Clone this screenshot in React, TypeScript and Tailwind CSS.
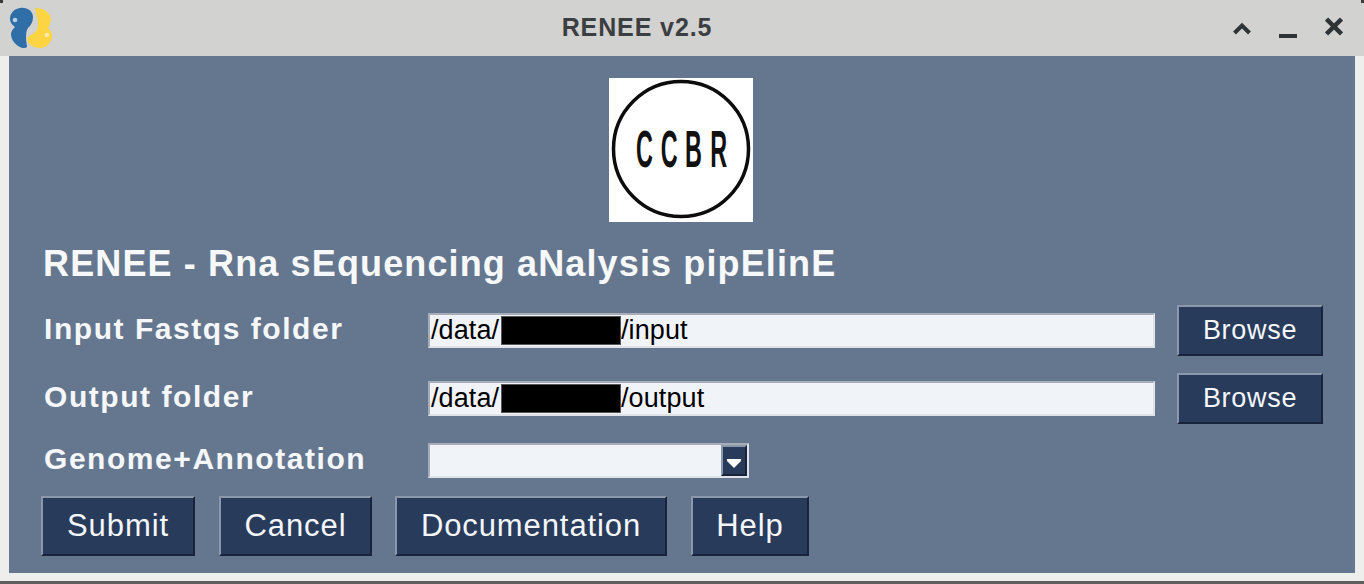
import React from "react";

const sans = "font-['Liberation_Sans',Arial,sans-serif]";

function PythonLogo() {
  return (
    <svg width="44" height="44" viewBox="9 5 44 44" aria-hidden="true">
      <path
        fill="#2f6ea6"
        d="M20 7C27 6 33 10 33 16C33 21 31 24 28 27C26 30 26 33 26 37C26 41 27 44 27 46C25 48 21 47 18 45C14 42 11 38 11 33C11 30 13 28 15 26C12 24 10 21 10 18C10 12 14 8 20 7Z"
      />
      <circle cx="15" cy="19" r="2.300" fill="#b9cfe4" />
      <path
        fill="#fdd542"
        d="M35 7C41 7 46 9 49 13C52 17 51 22 48 27C51 30 53 33 52 37C50 43 46 47 40 47C34 47 29 44 27 39C28 35 31 34 34 32C37 30 38 27 38 23C38 18 36 13 35 7Z"
      />
      <circle cx="47" cy="34" r="2.300" fill="#f5e9b4" />
    </svg>
  );
}

function TkButton({ label, className }: { label: string; className: string }) {
  return (
    <div
      className={`flex items-center justify-center bg-[#283b5b] text-[#f4f6fa] border-2 border-t-[#8b98ac] border-l-[#8b98ac] border-r-[#18243c] border-b-[#18243c] ${className}`}
    >
      {label}
    </div>
  );
}

function Redacted() {
  return <span className="inline-block w-[120px] h-[29px] bg-black border border-[#555]" />;
}

function PathField({ folder }: { folder: string }) {
  return (
    <div className="w-[727px] h-[35px] flex items-center pl-[1px] bg-[#f0f3f8] border-2 border-t-[#a6adb9] border-l-[#a6adb9] border-r-[#dfe2e7] border-b-[#dfe2e7] text-[27px] text-black tracking-[0.1px] whitespace-nowrap">
      <span className="w-[70px]">/data/</span>
      <Redacted />
      <span>{folder}</span>
    </div>
  );
}

function Label({ text }: { text: string }) {
  return (
    <div className="w-[387px] pl-[3px] pb-[4px] text-[30px] font-bold text-[#f5f7fa] tracking-[1.55px] whitespace-nowrap">
      {text}
    </div>
  );
}

export default function App() {
  return (
    <div className={`relative w-[1364px] h-[584px] overflow-hidden bg-[#eeeeec] flex flex-col ${sans}`}>
      <div className="h-[56px] shrink-0 bg-[#d2d2d0] flex items-center pl-[9px] pr-[21px]">
        <PythonLogo />
        <div className="flex-1 text-center text-[25px] font-bold text-[#3c3f41] pr-[12px] pb-[1px] tracking-[0.9px]">
          RENEE v2.5
        </div>
        <div className="flex items-center gap-[28px] text-[#2e3436]">
          <svg width="18" height="22" viewBox="0 0 18 22" aria-hidden="true">
            <path d="M1.500 16 9 8.500l7.500 7.500" fill="none" stroke="currentColor" strokeWidth="4" />
          </svg>
          <svg width="18" height="22" viewBox="0 0 18 22" aria-hidden="true">
            <path d="M0 19h18" fill="none" stroke="currentColor" strokeWidth="4" />
          </svg>
          <svg width="18" height="22" viewBox="0 0 18 22" aria-hidden="true">
            <path d="M1.500 2l15 15M16.500 2l-15 15" fill="none" stroke="currentColor" strokeWidth="4.500" />
          </svg>
        </div>
      </div>

      <div className="mx-[9px] h-[517px] bg-[#65778e] flex flex-col pl-[32px] pt-[22px]">
        <div className="self-center -ml-[34px] w-[144px] h-[144px] bg-white">
          <svg width="144" height="144" viewBox="0 0 144 144" aria-label="CCBR">
            <circle cx="72" cy="71" r="67.500" fill="none" stroke="#0c0c0c" strokeWidth="3.500" />
            <text
              x="60 115 169 225"
              y="89"
              fontFamily="'Liberation Sans',sans-serif"
              fontWeight="700"
              fontSize="52"
              fill="#111"
              transform="scale(0.45 1)"
            >
              CCBR
            </text>
          </svg>
        </div>

        <div className="mt-[20px] h-[44px] pl-[2px] flex items-center text-[36px] font-bold text-[#f7f8fa] tracking-[1.13px] whitespace-nowrap">
          RENEE - Rna sEquencing aNalysis pipElinE
        </div>

        <div className="mt-[19px] flex items-center h-[51px]">
          <Label text="Input Fastqs folder" />
          <PathField folder="/input" />
          <TkButton label="Browse" className="ml-[22px] w-[146px] h-[51px] text-[27px] tracking-[0.7px]" />
        </div>
        <div className="mt-[17px] flex items-center h-[51px]">
          <Label text="Output folder" />
          <PathField folder="/output" />
          <TkButton label="Browse" className="ml-[22px] w-[146px] h-[51px] text-[27px] tracking-[0.7px]" />
        </div>

        <div className="mt-[19px] flex items-center h-[35px]">
          <Label text="Genome+Annotation" />
          <div className="w-[321px] h-[35px] flex justify-end items-stretch bg-[#f0f3f8] border-2 border-t-[#a6adb9] border-l-[#a6adb9] border-r-[#dfe2e7] border-b-[#dfe2e7]">
            <div className="w-[26px] flex items-end justify-center pb-[6px] bg-[#283b5b] border-2 border-l-[#8b98ac] border-t-[#8b98ac] border-r-[#18243c] border-b-[#18243c]">
              <svg width="14" height="9" viewBox="0 0 14 9" aria-hidden="true">
                <path d="M0 0h14v2l-7 7-7-7z" fill="#fff" />
              </svg>
            </div>
          </div>
        </div>

        <div className="mt-[18px] flex text-[31px] tracking-[0.9px] whitespace-nowrap">
          <TkButton label="Submit" className="w-[154px] h-[60px]" />
          <TkButton label="Cancel" className="ml-[24px] w-[153px] h-[60px]" />
          <TkButton label="Documentation" className="ml-[23px] w-[272px] h-[60px]" />
          <TkButton label="Help" className="ml-[24px] w-[118px] h-[60px]" />
        </div>
      </div>
      <div className="absolute left-0 right-0 bottom-0 h-[3px] bg-[#5f5f5d]" />
      <div className="absolute left-0 top-0 w-[3px] h-[3px] bg-[#3a3a3a]" />
      <div className="absolute right-0 top-0 w-[3px] h-[3px] bg-[#3a3a3a]" />
    </div>
  );
}
